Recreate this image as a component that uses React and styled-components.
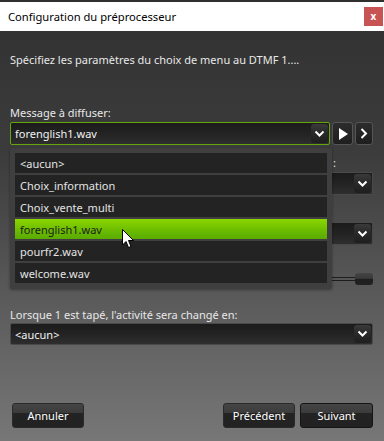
import React from 'react'
import styled, { createGlobalStyle } from 'styled-components'

const Global = createGlobalStyle`
  html, body { margin: 0; padding: 0; background: #2b2b2b; }
  body { font-family: "Noto Sans", "Open Sans", sans-serif; }
  * { box-sizing: border-box; }
`

const Window = styled.div`
  width: 384px;
  height: 441px;
  display: flex;
  flex-direction: column;
  overflow: hidden;
`

const TitleBar = styled.div`
  flex-shrink: 0;
  height: 31px;
  border-top: 2px solid #2f2f2f;
  background: #fff;
  display: flex;
  align-items: center;
  justify-content: space-between;
  padding: 0 1px 0 8px;
  font-size: 11.2px;
  color: #000;
`

const Close = styled.div`
  flex-shrink: 0;
  width: 19px;
  height: 19px;
  background: #c85353;
  color: #fff;
  font-size: 10px;
  font-weight: bold;
  display: flex;
  align-items: center;
  justify-content: center;
  line-height: 1;
  padding-bottom: 2px;
`

const Body = styled.div`
  flex: 1;
  position: relative;
  display: flex;
  flex-direction: column;
  padding: 0 11px 13px 10px;
  background: linear-gradient(180deg, #333 0%, #3c3c3c 30%, #5a5a5a 65%, #777 100%);
  font-size: 11px;
  color: #e8e8e8;
`

const Text = styled.div`
  flex-shrink: 0;
  line-height: 16px;
  height: 16px;
  white-space: nowrap;
  text-align: ${p => (p.$right ? 'right' : 'left')};
  padding-right: ${p => (p.$right ? 37 : 0)}px;
  margin-top: ${p => p.$mt || 0}px;
`

const Row = styled.div`
  flex-shrink: 0;
  display: flex;
  gap: 2px;
  margin-top: ${p => p.$mt || 0}px;
`

const Select = styled.div`
  flex: ${p => (p.$grow ? 1 : '0 0 auto')};
  height: ${p => p.$h || 23}px;
  border: 1px solid ${p => (p.$active ? '#65a50e' : '#4a4a4a')};
  border-radius: 2px;
  background: linear-gradient(180deg, #1b1b1b 0%, #232323 50%, #2e2e2e 100%);
  display: flex;
  align-items: center;
  justify-content: space-between;
  padding: 0 1px 0 4px;
  color: #f2f2f2;
  font-size: 11px;
  margin-top: ${p => p.$mt || 0}px;
`

const Chevron = styled.div`
  width: 17px;
  height: ${p => p.$h || 19}px;
  border-radius: 3px;
  background: linear-gradient(180deg, #3a3a3a 0%, #2a2a2a 45%, #1e1e1e 100%);
  display: flex;
  align-items: center;
  justify-content: center;
`

const IconButton = styled.div`
  width: ${p => p.$w}px;
  height: 23px;
  border: 1px solid #555;
  border-radius: 3px;
  background: linear-gradient(180deg, #2c2c2c 0%, #1e1e1e 100%);
  display: flex;
  align-items: center;
  justify-content: center;
`

const Slider = styled.div`
  flex-shrink: 0;
  display: flex;
  align-items: center;
  justify-content: flex-end;
  height: 12px;
  margin-top: 2px;
`

const Track = styled.div`
  width: 60px;
  height: 4px;
  border-top: 1px solid #1d1d1d;
  border-bottom: 1px solid #1d1d1d;
`

const Thumb = styled.div`
  width: 18px;
  height: 12px;
  border-radius: 3px;
  background: linear-gradient(180deg, #444 0%, #3a3a3a 45%, #1f1f1f 50%, #222 100%);
`

const Footer = styled.div`
  margin-top: auto;
  display: flex;
  justify-content: space-between;
  padding-left: 2px;
`

const Group = styled.div`
  display: flex;
  gap: 5px;
`

const Button = styled.div`
  width: ${p => p.$w || 72}px;
  height: 25px;
  border: 1px solid ${p => (p.$primary ? '#151515' : '#2a2a2a')};
  border-radius: 3px;
  background: linear-gradient(180deg, #454545 0%, #3b3b3b 40%, #232323 41%, #222 100%);
  color: #fff;
  font-size: 11px;
  display: flex;
  align-items: center;
  justify-content: center;
`

const Popup = styled.div`
  position: absolute;
  left: 10px;
  top: 117px;
  width: 322px;
  height: 141px;
  background: #3f3f3f;
  border-radius: 2px;
  padding: 5px 5px;
  display: flex;
  flex-direction: column;
  gap: 2px;
  box-shadow: 0 1px 3px rgba(0, 0, 0, 0.35);
`

const Item = styled.div`
  height: 20px;
  background: ${p => (p.$selected ? 'linear-gradient(180deg, #8cd600 0%, #6cbd00 55%, #5aab00 100%)' : '#232323')};
  color: ${p => (p.$selected ? '#1c1c1c' : '#e4e4e4')};
  font-size: 11px;
  display: flex;
  align-items: center;
  padding-left: 5px;
`

const Cursor = styled.svg`
  position: absolute;
  left: 122px;
  top: 198px;
`

const Down = () => (
  <svg width="11" height="8" viewBox="0 0 11 8">
    <polyline points="1.5,1.5 5.5,5.5 9.5,1.5" fill="none" stroke="#fff" strokeWidth="2" />
  </svg>
)

const items = ['<aucun>', 'Choix_information', 'Choix_vente_multi', 'forenglish1.wav', 'pourfr2.wav', 'welcome.wav']

export default function App() {
  return (
    <>
      <Global />
      <Window>
        <TitleBar>
          <span>Configuration du préprocesseur</span>
          <Close>x</Close>
        </TitleBar>
        <Body>
          <Text $mt={21}>Spécifiez les paramètres du choix de menu au DTMF 1....</Text>
          <Text $mt={37}>Message à diffuser:</Text>
          <Row $mt={1}>
            <Select $grow $active>
              <span>forenglish1.wav</span>
              <Chevron><Down /></Chevron>
            </Select>
            <IconButton $w={21}>
              <svg width="10" height="12" viewBox="0 0 10 12"><polygon points="1,0 10,6 1,12" fill="#fff" /></svg>
            </IconButton>
            <IconButton $w={18}>
              <svg width="8" height="11" viewBox="0 0 8 11"><polyline points="1.5,1 6,5.5 1.5,10" fill="none" stroke="#fff" strokeWidth="2" /></svg>
            </IconButton>
          </Row>
          <Text $mt={10} $right>Nombre de répétitions :</Text>
          <Select $mt={1}>
            <span>1</span>
            <Chevron><Down /></Chevron>
          </Select>
          <Text $mt={10} />
          <Select $mt={1}>
            <span>1</span>
            <Chevron><Down /></Chevron>
          </Select>
          <Text $mt={10} />
          <Slider>
            <Track />
            <Thumb />
          </Slider>
          <Text $mt={22}>Lorsque 1 est tapé, l'activité sera changé en:</Text>
          <Select $h={22}>
            <span>&lt;aucun&gt;</span>
            <Chevron $h={18}><Down /></Chevron>
          </Select>
          <Footer>
            <Button>Annuler</Button>
            <Group>
              <Button>Précédent</Button>
              <Button $w={73} $primary>Suivant</Button>
            </Group>
          </Footer>
          <Popup>
            {items.map(t => (
              <Item key={t} $selected={t === 'forenglish1.wav'}>{t}</Item>
            ))}
          </Popup>
          <Cursor width="13" height="20" viewBox="0 0 13 20">
            <polygon points="0.5,0.5 0.5,16 4,12.5 6.5,18.5 9,17.5 6.5,11.5 11.5,11.5" fill="#fff" stroke="#000" strokeWidth="1" />
          </Cursor>
        </Body>
      </Window>
    </>
  )
}
